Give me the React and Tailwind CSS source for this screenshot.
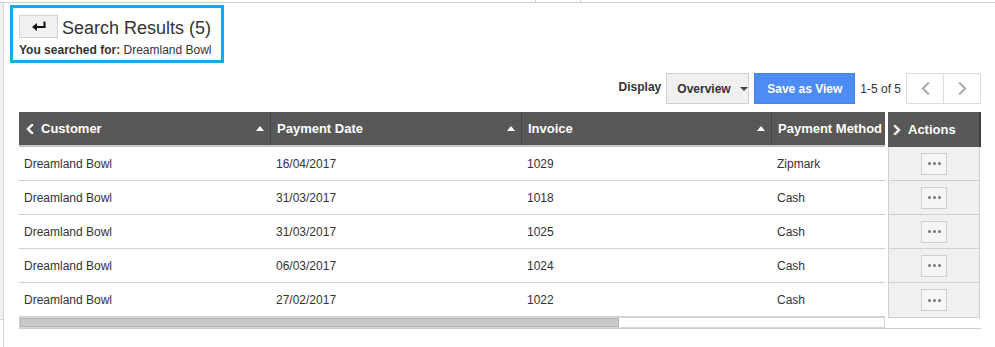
import React from "react";

const rows = [
  { customer: "Dreamland Bowl", date: "16/04/2017", invoice: "1029", method: "Zipmark" },
  { customer: "Dreamland Bowl", date: "31/03/2017", invoice: "1018", method: "Cash" },
  { customer: "Dreamland Bowl", date: "31/03/2017", invoice: "1025", method: "Cash" },
  { customer: "Dreamland Bowl", date: "06/03/2017", invoice: "1024", method: "Cash" },
  { customer: "Dreamland Bowl", date: "27/02/2017", invoice: "1022", method: "Cash" },
];

function SortUp() {
  return (
    <svg width="8" height="5" viewBox="0 0 8 5" className="shrink-0">
      <path d="M0 5 L4 0 L8 5 Z" fill="#ffffff" />
    </svg>
  );
}

function Chevron({ dir = "left", color = "#ffffff", size = 10, stroke = 2.4 }) {
  const d = dir === "left" ? "M7 1 L3 5 L7 9" : "M3 1 L7 5 L3 9";
  return (
    <svg width={size} height={size} viewBox="0 0 10 10" className="shrink-0">
      <path d={d} fill="none" stroke={color} strokeWidth={stroke} strokeLinecap="square" />
    </svg>
  );
}

function HeadCell({ label, w, chevron, sort = true, last }) {
  return (
    <div
      className={`flex items-center h-full px-[6px] gap-[6px] ${last ? "" : "border-r border-[#454545]"}`}
      style={{ width: w }}
    >
      {chevron && <Chevron dir="left" />}
      <span className="flex-1 font-bold text-[13px] text-white whitespace-nowrap">{label}</span>
      {sort && <SortUp />}
    </div>
  );
}

export default function App() {
  return (
    <div
      className="w-[995px] h-[347px] bg-white text-[#333] overflow-hidden flex flex-col"
      style={{ fontFamily: '"Liberation Sans", Arial, sans-serif' }}
    >
      {/* top strip */}
      <div className="h-[3px] border-b border-[#cfcfcf] flex shrink-0">
        <div className="w-[535px]" />
        <div className="w-[46px] border-x border-[#cfcfcf]" />
      </div>

      <div className="flex flex-1">
        <div className="w-[4px] flex flex-col border-r border-[#d4d4d4]">
          <div className="h-[317px] bg-[#eef0f3] border-b border-[#d4d4d4]" />
        </div>

        <div className="flex-1 pl-[6px] pt-[2px]">
          {/* title box */}
          <div className="w-[214px] h-[58px] border-[3px] border-[#1aa8e4] pl-[6px] pt-[5px]">
            <div className="flex items-center gap-[4px] whitespace-nowrap">
              <button className="w-[39px] h-[23px] shrink-0 bg-[#f0f0f0] border border-[#d2d2d2] flex items-center justify-center">
                <svg width="16" height="11" viewBox="0 0 16 11">
                  <path d="M13.5 0.5 V6" stroke="#111" strokeWidth="2" fill="none" />
                  <path d="M14.5 6 H5" stroke="#111" strokeWidth="2" fill="none" />
                  <path d="M1 6 L6 2 V10 Z" fill="#111" />
                </svg>
              </button>
              <span className="text-[18px] leading-[24px] text-[#333] whitespace-nowrap mt-[3px]">Search Results (5)</span>
            </div>
            <div className="text-[12px] leading-[14px] mt-[3px] whitespace-nowrap">
              <span className="font-bold">You searched for: </span>
              <span>Dreamland Bowl</span>
            </div>
          </div>

          {/* toolbar */}
          <div className="flex items-center justify-end h-[31px] mt-[10px] w-[971px]">
            <span className="font-bold text-[12px] mr-[5px] mb-[4px]">Display</span>
            <button className="h-[31px] w-[83px] bg-[#f0f0f0] border border-[#d0d0d0] flex items-center pl-[10px] gap-[9px]">
              <span className="font-bold text-[12px]">Overview</span>
              <svg width="8" height="4" viewBox="0 0 8 4">
                <path d="M0 0 L8 0 L4 4 Z" fill="#444" />
              </svg>
            </button>
            <button className="h-[31px] w-[101px] ml-[5px] bg-[#4d8cf5] border border-[#4383ee] text-white font-bold text-[12px]">
              Save as View
            </button>
            <span className="text-[12px] ml-[5px] mr-[5px]">1-5 of 5</span>
            <div className="flex border border-[#dcdcdc] h-[31px]">
              <div className="w-[37px] flex items-center justify-center border-r border-[#dcdcdc]">
                <Chevron dir="left" color="#aaa" size={13} stroke={1.6} />
              </div>
              <div className="w-[36px] flex items-center justify-center">
                <Chevron dir="right" color="#aaa" size={13} stroke={1.6} />
              </div>
            </div>
          </div>

          {/* table */}
          <div className="mt-[8px] ml-[9px] w-[962px]">
            <div className="flex">
              <div className="w-[866px] overflow-hidden">
                <div className="flex h-[35px] bg-[#585858] border-b-[2px] border-[#c6c6c6]">
                  <HeadCell label="Customer" w={252} chevron />
                  <HeadCell label="Payment Date" w={251} />
                  <HeadCell label="Invoice" w={250} />
                  <HeadCell label="Payment Method" w={113} sort={false} last />
                </div>
                {rows.map((r, i) => (
                  <div key={i} className="flex h-[34px] items-center border-b border-[#d0d0d0] text-[12px]">
                    <div className="w-[252px] pl-[5px]">{r.customer}</div>
                    <div className="w-[251px] pl-[5px]">{r.date}</div>
                    <div className="w-[250px] pl-[5px]">{r.invoice}</div>
                    <div className="w-[113px] pl-[5px]">{r.method}</div>
                  </div>
                ))}
                <div className="h-[11px] border border-[#d6d6d6] bg-white">
                  <div className="w-[599px] h-full bg-[#c9c9c9] border border-[#b5b5b5]" />
                </div>
              </div>

              <div className="ml-[3px] w-[93px] flex flex-col">
                <div className="h-[35px] bg-[#585858] border-r-2 border-[#3f3f3f] flex items-center pl-[4px] gap-[6px]">
                  <Chevron dir="right" />
                  <span className="font-bold text-[13px] text-white">Actions</span>
                </div>
                <div className="bg-[#f0f0f0] border-x border-b border-[#cfcfcf] mr-[1px]">
                  {rows.map((r, i) => (
                    <div
                      key={i}
                      className={`h-[34px] flex items-center justify-center ${i < rows.length - 1 ? "border-b border-[#d0d0d0]" : ""}`}
                    >
                      <div className="w-[26px] h-[22px] bg-[#f5f5f5] border border-[#cfcfcf] flex items-center justify-center gap-[2px]">
                        <span className="w-[3px] h-[3px] rounded-full bg-[#777]" />
                        <span className="w-[3px] h-[3px] rounded-full bg-[#777]" />
                        <span className="w-[3px] h-[3px] rounded-full bg-[#777]" />
                      </div>
                    </div>
                  ))}
                </div>
              </div>
            </div>
            <div className="border-t border-[#cfcfcf] w-[962px]" />
          </div>
        </div>
      </div>
    </div>
  );
}
